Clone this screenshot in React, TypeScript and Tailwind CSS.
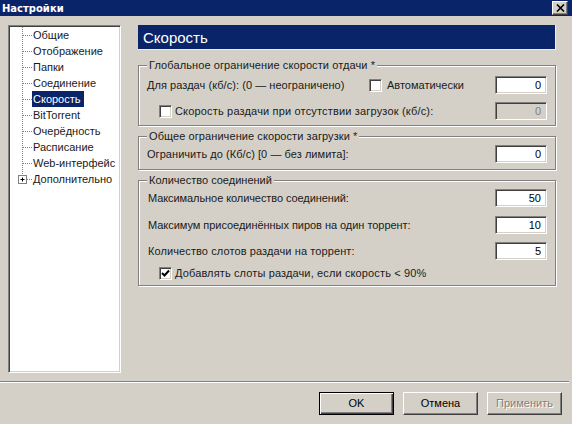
import React from "react";

const font = "font-['Liberation_Sans',Arial,sans-serif]";

function TreeRow({ label, selected, plus, last }: { label: string; selected?: boolean; plus?: boolean; last?: boolean }) {
  return (
    <div className="flex h-4 items-center pl-1">
      <svg width="18" height="16" viewBox="0 0 18 16" className="shrink-0">
        <path d={last ? "M8.5 0V4" : "M8.5 0V16"} stroke="#808080" strokeDasharray="1 1" fill="none" />
        <path d="M9 8.5H18" stroke="#808080" strokeDasharray="1 1" fill="none" />
        {plus && (
          <>
            <rect x="4.5" y="4.5" width="8" height="8" fill="#fff" stroke="#808080" />
            <path d="M6.5 8.5H10.5M8.5 6.5V10.5" stroke="#000" fill="none" />
          </>
        )}
      </svg>
      <span className={`flex h-4 items-center pl-px pr-[3px] whitespace-nowrap ${selected ? "bg-[#0a246a] text-white" : ""}`}>{label}</span>
    </div>
  );
}

function Check({ checked }: { checked?: boolean }) {
  return (
    <span className="box-border flex h-[13px] w-[13px] shrink-0 items-center justify-center border border-b-white border-l-[#808080] border-r-white border-t-[#808080] bg-white shadow-[inset_1px_1px_0_#404040,inset_-1px_-1px_0_#d4d0c8]">
      {checked && (
        <svg width="9" height="9" viewBox="0 0 9 9">
          <path d="M1 4L3.5 6.5L8 1.5" stroke="#000" strokeWidth="2" fill="none" />
        </svg>
      )}
    </span>
  );
}

function Field({ value, disabled }: { value: string; disabled?: boolean }) {
  return (
    <input
      readOnly
      value={value}
      className={`box-border h-[18px] w-[52px] shrink-0 border border-b-white border-l-[#808080] border-r-white border-t-[#808080] pr-[5px] text-right text-[11px] outline-none shadow-[inset_1px_1px_0_#404040,inset_-1px_-1px_0_#d4d0c8] ${font} ${disabled ? "bg-[#d4d0c8] text-[#808080]" : "bg-white text-black"}`}
    />
  );
}

function Group({ title, className, children }: { title: string; className: string; children: React.ReactNode }) {
  return (
    <fieldset className={`border border-[#808080] px-2 shadow-[1px_1px_0_#fff,inset_1px_1px_0_#fff] ${className}`}>
      <legend className="bg-[#d4d0c8] px-[2px] text-[11px] leading-[13px]">{title}</legend>
      {children}
    </fieldset>
  );
}

function Btn({ label, primary, disabled }: { label: string; primary?: boolean; disabled?: boolean }) {
  return (
    <button
      className={`box-border h-[23px] w-[75px] border text-[11px] ${font} ${
        primary
          ? "border-black shadow-[inset_1px_1px_0_#fff,inset_-1px_-1px_0_#404040,inset_-2px_-2px_0_#808080]"
          : "border-b-[#404040] border-l-white border-r-[#404040] border-t-white shadow-[inset_-1px_-1px_0_#808080]"
      } ${disabled ? "text-[#808080] [text-shadow:1px_1px_0_#fff]" : "text-black"}`}
    >
      {label}
    </button>
  );
}

export default function App() {
  const items = ["Общие", "Отображение", "Папки", "Соединение", "Скорость", "BitTorrent", "Очерёдность", "Расписание", "Web-интерфейс", "Дополнительно"];
  return (
    <div className={`flex h-[424px] w-[572px] flex-col overflow-hidden bg-[#d4d0c8] text-[11px] leading-[13px] text-[#1a1a1a] ${font}`}>
      <div className="flex h-4 shrink-0 items-center justify-between bg-[#0a246a] pl-[2px] pr-1">
        <span className="font-['DejaVu_Sans',sans-serif] text-[10px] font-bold text-white">Настройки</span>
        <span className="box-border flex h-[14px] w-4 items-center justify-center border border-b-[#404040] border-l-white border-r-[#404040] border-t-white bg-[#d4d0c8] shadow-[inset_-1px_-1px_0_#808080]">
          <svg width="9" height="8" viewBox="0 0 9 8">
            <path d="M1 0.5L8 7.5M8 0.5L1 7.5" stroke="#000" strokeWidth="1.6" fill="none" />
          </svg>
        </span>
      </div>

      <div className="flex flex-1 pl-2 pt-[9px]">
        <div className="box-border h-[348px] w-[113px] shrink-0 border border-b-white border-l-[#808080] border-r-white border-t-[#808080] bg-white p-px shadow-[inset_1px_1px_0_#404040,inset_-1px_-1px_0_#d4d0c8]">
          {items.map((it, i) => (
            <TreeRow key={it} label={it} selected={i === 4} plus={i === 9} last={i === 9} />
          ))}
        </div>

        <div className="ml-[17px] w-[418px] shrink-0">
          <div className="box-border flex h-[25px] items-center border-b border-r border-b-[#f0eee9] border-r-[#f0eee9] bg-[#0a246a] pl-[5px] text-[15px] text-white">Скорость</div>

          <Group title="Глобальное ограничение скорости отдачи *" className="mt-[9px] h-[67px] tracking-[0.1px]">
            <div className="mt-1 flex h-[18px] items-center tracking-normal">
              <span className="w-[222px] tracking-[0.05px]">Для раздач (кб/с): (0 — неограничено)</span>
              <Check />
              <span className="ml-[5px]">Автоматически</span>
              <span className="ml-auto"><Field value="0" /></span>
            </div>
            <div className="mt-2 flex h-[18px] items-center pl-3 tracking-normal">
              <Check />
              <span className="ml-[3px] tracking-[0.17px]">Скорость раздачи при отсутствии загрузок (кб/с):</span>
              <span className="ml-auto"><Field value="0" disabled /></span>
            </div>
          </Group>

          <Group title="Общее ограничение скорости загрузки *" className="mt-[4px] h-[40px] tracking-[0.08px]">
            <div className="mt-[2px] flex h-[18px] items-center justify-between tracking-normal">
              <span className="tracking-[0.05px]">Ограничить до (Кб/с) [0 — без лимита]:</span>
              <Field value="0" />
            </div>
          </Group>

          <Group title="Количество соединений" className="mt-[4px] h-[112px]">
            <div className="mt-[2px] flex h-[18px] items-center justify-between pl-px">
              <span className="tracking-[-0.08px]">Максимальное количество соединений:</span>
              <Field value="50" />
            </div>
            <div className="mt-[9px] flex h-[18px] items-center justify-between pl-px">
              <span className="tracking-[-0.04px]">Максимум присоединённых пиров на один торрент:</span>
              <Field value="10" />
            </div>
            <div className="mt-2 flex h-[18px] items-center justify-between pl-px">
              <span className="tracking-[0.1px]">Количество слотов раздачи на торрент:</span>
              <Field value="5" />
            </div>
            <div className="mt-[7px] flex h-[13px] items-center pl-3">
              <Check checked />
              <span className="ml-[3px] tracking-[0.13px]">Добавлять слоты раздачи, если скорость &lt; 90%</span>
            </div>
          </Group>
        </div>
      </div>

      <div className="mr-[3px] h-[2px] shrink-0 border-b border-b-white bg-[#808080]" />
      <div className="flex h-[41px] shrink-0 items-start justify-end gap-[9px] pr-[10px] pt-[9px]">
        <Btn label="OK" primary />
        <Btn label="Отмена" />
        <Btn label="Применить" disabled />
      </div>
    </div>
  );
}
